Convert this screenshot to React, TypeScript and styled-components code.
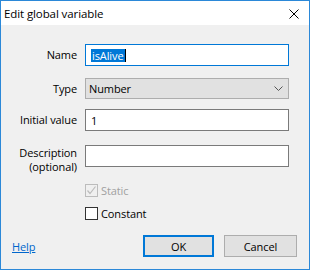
import React from "react";
import styled, { createGlobalStyle } from "styled-components";

const GlobalStyle = createGlobalStyle`
  html, body { margin: 0; padding: 0; background: #f0f0f0; }
  * { box-sizing: border-box; }
  body {
    font-family: "Open Sans", "Noto Sans", "Liberation Sans", sans-serif;
    font-size: 11px;
    letter-spacing: -0.1px;
    color: #000;
  }
`;

const Window = styled.div`
  width: 310px;
  height: 270px;
  border: 1px solid #2b88d8;
  display: flex;
  flex-direction: column;
  background: #f0f0f0;
`;

const TitleBar = styled.div`
  height: 24px;
  background: #fff;
  display: flex;
  align-items: center;
  padding-left: 3px;
  padding-right: 10px;
  flex-shrink: 0;
`;

const Title = styled.div`
  flex: 1;
  font-size: 11.5px;
  line-height: 16px;
  margin-top: 1px;
`;

const CloseButton = styled.div`
  width: 10px;
  height: 10px;
  display: flex;
  margin-top: 1px;
`;

const Body = styled.div`
  flex: 1;
  display: flex;
  flex-direction: column;
  padding-top: 19px;
`;

const Row = styled.div<{ $mt: number; $top?: boolean; $h?: number }>`
  display: flex;
  align-items: ${(p) => (p.$top ? "flex-start" : "center")};
  margin-top: ${(p) => p.$mt}px;
  height: ${(p) => p.$h ?? 22}px;
  gap: 8px;
`;

const Label = styled.div<{ $mt?: number }>`
  width: 76px;
  text-align: right;
  line-height: 14px;
  margin-top: ${(p) => p.$mt ?? 0}px;
`;

const TextBox = styled.div<{ $focused?: boolean }>`
  width: 204px;
  height: 22px;
  background: #fff;
  border: 1px solid ${(p) => (p.$focused ? "#0078d7" : "#7a7a7a")};
  display: flex;
  align-items: center;
  padding-left: 5px;
`;

const Selected = styled.span`
  background: #0078d7;
  color: #fff;
  line-height: 13px;
  padding: 0 1px;
`;

const Caret = styled.span`
  display: inline-block;
  width: 1px;
  height: 13px;
  background: #000;
`;

const Select = styled.div`
  width: 204px;
  height: 21px;
  background: #e1e1e1;
  border: 1px solid #adadad;
  display: flex;
  align-items: center;
  justify-content: space-between;
  padding-left: 3px;
  padding-right: 5px;
`;

const CheckRow = styled.div<{ $mt: number; $disabled?: boolean }>`
  display: flex;
  align-items: center;
  gap: 3px;
  padding-left: 84px;
  margin-top: ${(p) => p.$mt}px;
  height: 13px;
  color: ${(p) => (p.$disabled ? "#a0a0a0" : "#000")};
`;

const Box = styled.div<{ $disabled?: boolean }>`
  width: 13px;
  height: 13px;
  border: 1px solid ${(p) => (p.$disabled ? "#bcbcbc" : "#333")};
  background: ${(p) => (p.$disabled ? "#f0f0f0" : "#fff")};
  display: flex;
  align-items: center;
  justify-content: center;
`;

const Footer = styled.div`
  display: flex;
  align-items: center;
  margin-top: 15px;
  padding-left: 11px;
  padding-right: 12px;
`;

const HelpLink = styled.a`
  color: #0066cc;
  text-decoration: underline;
  flex: 1;
  cursor: pointer;
`;

const Button = styled.div<{ $primary?: boolean; $w: number }>`
  width: ${(p) => p.$w}px;
  height: 22px;
  background: #e1e1e1;
  border: ${(p) => (p.$primary ? "2px solid #0078d7" : "1px solid #adadad")};
  display: flex;
  align-items: center;
  justify-content: center;
  margin-left: ${(p) => (p.$primary ? 0 : 10)}px;
`;

export default function App() {
  return (
    <>
      <GlobalStyle />
      <Window>
        <TitleBar>
          <Title>Edit global variable</Title>
          <CloseButton>
            <svg width="10" height="10" viewBox="0 0 10 10">
              <path d="M0.5 0.5 L9.5 9.5 M9.5 0.5 L0.5 9.5" stroke="#000" strokeWidth="1" />
            </svg>
          </CloseButton>
        </TitleBar>
        <Body>
          <Row $mt={0}>
            <Label>Name</Label>
            <TextBox $focused>
              <Selected>isAlive</Selected>
              <Caret />
            </TextBox>
          </Row>
          <Row $mt={12} $h={21}>
            <Label>Type</Label>
            <Select>
              <span>Number</span>
              <svg width="9" height="5" viewBox="0 0 9 5">
                <path d="M0.5 0.5 L4.5 4.5 L8.5 0.5" stroke="#555" strokeWidth="1" fill="none" />
              </svg>
            </Select>
          </Row>
          <Row $mt={10}>
            <Label>Initial value</Label>
            <TextBox>1</TextBox>
          </Row>
          <Row $mt={14} $top>
            <Label $mt={1}>
              Description
              <br />
              (optional)
            </Label>
            <TextBox />
          </Row>
          <CheckRow $mt={17} $disabled>
            <Box $disabled>
              <svg width="11" height="11" viewBox="0 0 11 11">
                <path d="M1.5 5.5 L4 8.5 L9.5 1.5" stroke="#bcbcbc" strokeWidth="1.2" fill="none" />
              </svg>
            </Box>
            <span>Static</span>
          </CheckRow>
          <CheckRow $mt={10}>
            <Box />
            <span>Constant</span>
          </CheckRow>
          <Footer>
            <HelpLink>Help</HelpLink>
            <Button $primary $w={71}>OK</Button>
            <Button $w={73}>Cancel</Button>
          </Footer>
        </Body>
      </Window>
    </>
  );
}
